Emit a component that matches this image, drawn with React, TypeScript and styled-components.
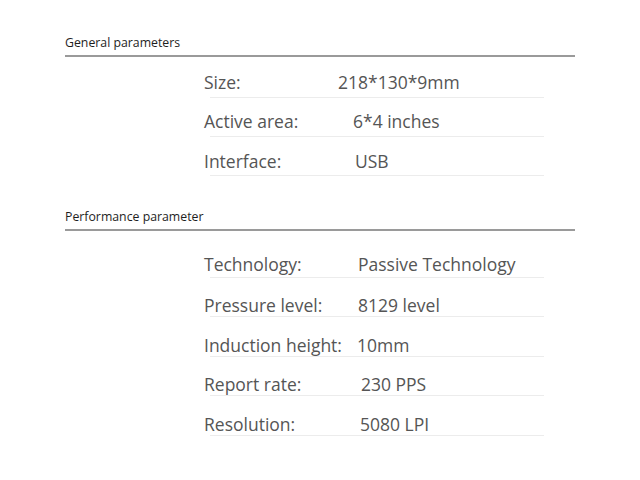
import styled, { createGlobalStyle } from "styled-components";

type Spec = { label: string; value: string; at: number; pad: number };

const general: Spec[] = [
  { label: "Size:", value: "218*130*9mm", at: 134, pad: 5 },
  { label: "Active area:", value: "6*4 inches", at: 149, pad: 5 },
  { label: "Interface:", value: "USB", at: 151, pad: 4 },
];

const performance: Spec[] = [
  { label: "Technology:", value: "Passive Technology", at: 154, pad: 3 },
  { label: "Pressure level:", value: "8129 level", at: 154, pad: 1 },
  { label: "Induction height:", value: "10mm", at: 153, pad: 1 },
  { label: "Report rate:", value: "230 PPS", at: 157, pad: 1 },
  { label: "Resolution:", value: "5080 LPI", at: 156, pad: 1 },
];

const App = () => {
  return (
    <>
      <GlobalStyle />
      <Page>
        <Section>
          <SectionTitle>General parameters</SectionTitle>
          <SpecList $top={2} $pitch={39}>
            {general.map((s) => (
              <SpecRow key={s.label} $pad={s.pad}>
                <Label $width={s.at}>{s.label}</Label>
                <Value>{s.value}</Value>
              </SpecRow>
            ))}
          </SpecList>
        </Section>
        <Section>
          <SectionTitle>Performance parameter</SectionTitle>
          <SpecList $top={7} $pitch={39.6}>
            {performance.map((s) => (
              <SpecRow key={s.label} $pad={s.pad}>
                <Label $width={s.at}>{s.label}</Label>
                <Value>{s.value}</Value>
              </SpecRow>
            ))}
          </SpecList>
        </Section>
      </Page>
    </>
  );
};

const GlobalStyle = createGlobalStyle`
  body {
    margin: 0;
    background: #ffffff;
    font-family: "Open Sans", "Noto Sans", sans-serif;
  }
`;

const Page = styled.div`
  width: 510px;
  padding: 34px 0 0 65px;
  display: flex;
  flex-direction: column;
  gap: 32px;
`;

const Section = styled.section`
  display: flex;
  flex-direction: column;
`;

const SectionTitle = styled.h2`
  margin: 0;
  padding-bottom: 3px;
  font-size: 12.3px;
  font-weight: 400;
  line-height: 18px;
  color: #1e1e1e;
  border-bottom: 2px solid #9a9a9a;
`;

const SpecList = styled.div<{ $top: number; $pitch: number }>`
  margin: ${(p) => p.$top}px 0 0 145px;
  width: 334px;
  display: flex;
  flex-direction: column;

  & > div {
    height: ${(p) => p.$pitch}px;
  }
`;

const SpecRow = styled.div<{ $pad: number }>`
  box-sizing: border-box;
  display: flex;
  align-items: flex-end;
  padding-bottom: ${(p) => p.$pad}px;
  border-bottom: 1px solid #ececec;
  font-size: 17.5px;
  line-height: 20px;
  color: #555555;
`;

const Label = styled.span<{ $width: number }>`
  flex: none;
  width: ${(p) => p.$width}px;
  margin-left: -6px;
  white-space: nowrap;
`;

const Value = styled.span`
  white-space: nowrap;
`;

export default App;
